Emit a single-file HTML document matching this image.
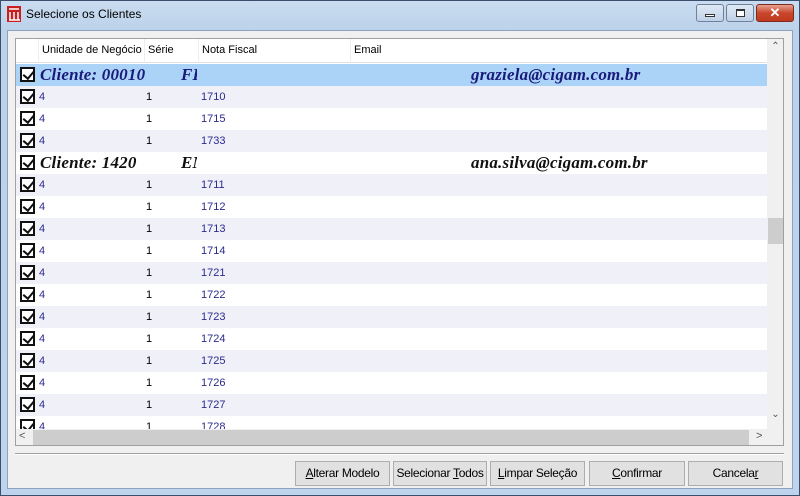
<!DOCTYPE html>
<html><head><meta charset="utf-8"><style>
*{margin:0;padding:0;box-sizing:border-box}
body{width:800px;height:496px;overflow:hidden;background:#a9c5e4;font-family:"Liberation Sans",sans-serif;font-size:11px;position:relative}
.frame{position:absolute;left:0;top:0;width:800px;height:496px;border:1px solid #3a4f6e;background:linear-gradient(#c9dcf0,#bcd2ea 30px,#bdd4ec)}
.title{position:absolute;left:26px;top:7px;font-size:12px;color:#000}
.client{position:absolute;left:7px;top:30px;width:786px;height:459px;background:#f0f0f0;border:1px solid #8ea3bd}
.grid{position:absolute;left:15px;top:38px;width:769px;height:408px;border:1px solid #a0a0a0;background:#fff;overflow:hidden}
.hdr{position:absolute;left:0;top:0;height:24px;width:751px;background:#fff;border-bottom:1px solid #e0e0e0}
.hdr span{position:absolute;color:#000;font-size:11px;height:24px;border-left:1px solid #ededed;padding-left:3px;top:0;line-height:22px}
.row{position:absolute;left:0;width:751px;height:22px;background:#fff}
.row.g{background:#f0f0f8}
.row.s{background:#abd3f8}
.cb{position:absolute;left:4px;top:3px;width:15px;height:15px;border:2px solid #111;background:#fff}
.cb:after{content:"";position:absolute;left:3px;top:0px;width:5px;height:8px;border:solid #111;border-width:0 2.5px 2.5px 0;transform:rotate(40deg)}
.d{position:absolute;top:5px;color:#2b2b8f;font-size:11px}
.d.n{color:#000}
.grp{position:absolute;top:1px;font-family:"Liberation Serif",serif;font-weight:bold;font-style:italic;font-size:17px;letter-spacing:0.2px}
.vs{position:absolute;left:751px;top:0;width:17px;height:390px;background:#f0f0f0}
.hs{position:absolute;left:0;top:390px;width:751px;height:17px;background:#f0f0f0}
.btn{position:absolute;top:461px;height:25px;border:1px solid #adadad;background:#e1e1e1;font-size:12px;text-align:center;line-height:23px;color:#000;letter-spacing:-0.3px}
</style></head><body>
<div class="frame"></div>
<svg style="position:absolute;left:7px;top:6px" width="14" height="16"><rect x="0" y="0" width="14" height="16" fill="#c62020"/><path d="M2 3h10M3 6v8M7 6v8M11 6v8M2 14h11" stroke="#fff" stroke-width="1.5"/></svg>
<div class="title">Selecione os Clientes</div>
<div style="position:absolute;left:696px;top:4px;width:28px;height:18px;border:1px solid #6d819c;border-radius:3px;background:linear-gradient(#dfe9f5,#c0d1e6)"><div style="position:absolute;left:8px;top:9px;width:10px;height:3px;background:#fff;border:1px solid #333"></div></div>
<div style="position:absolute;left:726px;top:4px;width:28px;height:18px;border:1px solid #6d819c;border-radius:3px;background:linear-gradient(#dfe9f5,#c0d1e6)"><div style="position:absolute;left:9px;top:4px;width:9px;height:8px;border:1px solid #333;border-top-width:2px;background:#fff"></div></div>
<div style="position:absolute;left:756px;top:4px;width:38px;height:18px;border:1px solid #7a2a20;border-radius:3px;background:linear-gradient(#e8a190,#c9462c 50%,#c0391f);color:#fff;font-weight:bold;font-size:13px;text-align:center;line-height:16px">✕</div>
<div class="client"></div>
<div class="grid">
<div class="hdr"><span style="left:22px">Unidade de Negócio</span><span style="left:128px">Série</span><span style="left:182px">Nota Fiscal</span><span style="left:334px">Email</span></div>
<div class="row s" style="top:25px"><div class="cb"></div><div class="grp" style="left:24px;color:#1a1a7a">Cliente: 00010</div><div class="grp" style="left:165px;color:#1a1a7a;width:16px;overflow:hidden">FI</div><div class="grp" style="left:455px;color:#1a1a7a">graziela@cigam.com.br</div></div>
<div class="row g" style="top:47px"><div class="cb"></div><div class="d" style="left:23px">4</div><div class="d n" style="left:130px">1</div><div class="d" style="left:185px">1710</div></div>
<div class="row" style="top:69px"><div class="cb"></div><div class="d" style="left:23px">4</div><div class="d n" style="left:130px">1</div><div class="d" style="left:185px">1715</div></div>
<div class="row g" style="top:91px"><div class="cb"></div><div class="d" style="left:23px">4</div><div class="d n" style="left:130px">1</div><div class="d" style="left:185px">1733</div></div>
<div class="row" style="top:113px"><div class="cb"></div><div class="grp" style="left:24px;color:#111">Cliente: 1420</div><div class="grp" style="left:165px;color:#111;width:16px;overflow:hidden">EM</div><div class="grp" style="left:455px;color:#111">ana.silva@cigam.com.br</div></div>
<div class="row g" style="top:135px"><div class="cb"></div><div class="d" style="left:23px">4</div><div class="d n" style="left:130px">1</div><div class="d" style="left:185px">1711</div></div>
<div class="row" style="top:157px"><div class="cb"></div><div class="d" style="left:23px">4</div><div class="d n" style="left:130px">1</div><div class="d" style="left:185px">1712</div></div>
<div class="row g" style="top:179px"><div class="cb"></div><div class="d" style="left:23px">4</div><div class="d n" style="left:130px">1</div><div class="d" style="left:185px">1713</div></div>
<div class="row" style="top:201px"><div class="cb"></div><div class="d" style="left:23px">4</div><div class="d n" style="left:130px">1</div><div class="d" style="left:185px">1714</div></div>
<div class="row g" style="top:223px"><div class="cb"></div><div class="d" style="left:23px">4</div><div class="d n" style="left:130px">1</div><div class="d" style="left:185px">1721</div></div>
<div class="row" style="top:245px"><div class="cb"></div><div class="d" style="left:23px">4</div><div class="d n" style="left:130px">1</div><div class="d" style="left:185px">1722</div></div>
<div class="row g" style="top:267px"><div class="cb"></div><div class="d" style="left:23px">4</div><div class="d n" style="left:130px">1</div><div class="d" style="left:185px">1723</div></div>
<div class="row" style="top:289px"><div class="cb"></div><div class="d" style="left:23px">4</div><div class="d n" style="left:130px">1</div><div class="d" style="left:185px">1724</div></div>
<div class="row g" style="top:311px"><div class="cb"></div><div class="d" style="left:23px">4</div><div class="d n" style="left:130px">1</div><div class="d" style="left:185px">1725</div></div>
<div class="row" style="top:333px"><div class="cb"></div><div class="d" style="left:23px">4</div><div class="d n" style="left:130px">1</div><div class="d" style="left:185px">1726</div></div>
<div class="row g" style="top:355px"><div class="cb"></div><div class="d" style="left:23px">4</div><div class="d n" style="left:130px">1</div><div class="d" style="left:185px">1727</div></div>
<div class="row" style="top:377px"><div class="cb"></div><div class="d" style="left:23px">4</div><div class="d n" style="left:130px">1</div><div class="d" style="left:185px">1728</div></div>
<div class="vs"><div style="position:absolute;top:2px;width:17px;text-align:center;font-size:10px;color:#555">⌃</div><div style="position:absolute;left:1px;top:179px;width:15px;height:26px;background:#cdcdcd"></div><div style="position:absolute;top:370px;width:17px;text-align:center;font-size:10px;color:#555">⌄</div></div>
<div class="hs"><div style="position:absolute;left:3px;top:1px;font-size:11px;color:#555">&lt;</div><div style="position:absolute;left:17px;top:1px;width:716px;height:15px;background:#cdcdcd"></div><div style="position:absolute;left:740px;top:1px;font-size:11px;color:#555">&gt;</div></div>
<div style="position:absolute;left:751px;top:390px;width:17px;height:17px;background:#f0f0f0"></div>
</div>
<div style="position:absolute;left:15px;top:453px;width:769px;height:2px;border-top:1px solid #a0a0a0;border-bottom:1px solid #fff"></div>
<div class="btn" style="left:295px;width:95px"><u>A</u>lterar Modelo</div>
<div class="btn" style="left:393px;width:94px">Selecionar <u>T</u>odos</div>
<div class="btn" style="left:490px;width:95px"><u>L</u>impar Seleção</div>
<div class="btn" style="left:589px;width:96px"><u>C</u>onfirmar</div>
<div class="btn" style="left:688px;width:95px">Cancela<u>r</u></div>
</body></html>
